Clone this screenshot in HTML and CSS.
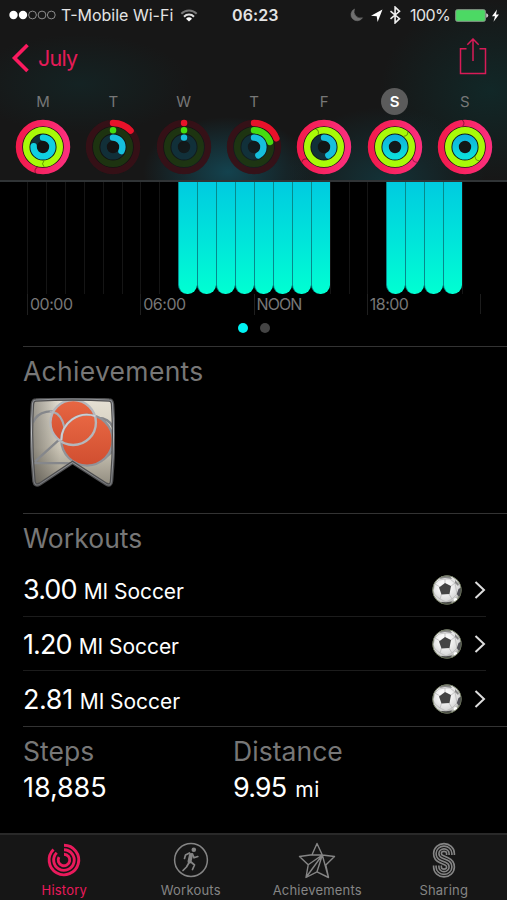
FILE: index.html
```
<!DOCTYPE html>
<html lang="en">
<head>
<meta charset="utf-8">
<title>Activity</title>
<link rel="stylesheet" href="styles.css">
</head>
<body>
<svg class="defs" width="0" height="0" aria-hidden="true">
  <defs>
    <linearGradient id="move" x1="0" y1="0" x2="1" y2="0"><stop offset="0" stop-color="#f31b4d"/><stop offset="1" stop-color="#fb2f7c"/></linearGradient>
    <linearGradient id="stand" x1="0" y1="0" x2="0" y2="1"><stop offset="0" stop-color="#0fb2dc"/><stop offset="1" stop-color="#0ce0dc"/></linearGradient>
    <radialGradient id="ballShade" cx=".42" cy=".38" r=".62"><stop offset=".3" stop-color="#f8f8f8"/><stop offset=".8" stop-color="#d8d8d8"/><stop offset="1" stop-color="#9d9f98"/></radialGradient>
    <clipPath id="ballClip"><circle cx="15" cy="15" r="14.2"/></clipPath>
    <symbol id="ball" viewBox="0 0 30 30">
      <circle cx="15" cy="15" r="14.500" fill="url(#ballShade)"/>
      <g clip-path="url(#ballClip)">
        <path d="M8 12L3 9M18.500 11.500L23 8M17 19L20 24M9.500 19L8 24M13 8.500V4M3 9L1 16L3 20L8 24L14 27L20 24L25 19L23 8L18 4L13 4L7 5Z" fill="none" stroke="#b4b4b4" stroke-width=".7"/>
        <path d="M13 8L19 11L17.500 19L9.500 19.500L7 12.500Z" fill="#444"/>
        <path d="M9 0L18 1L20 4L13 3L8 4Z" fill="#888"/>
        <path d="M0 8L2 7L2 10L1 15Z" fill="#777"/>
        <path d="M30 12L26.500 14L24.800 19L27 22L30 19Z" fill="#505056"/>
        <path d="M9 27L14 27.300L20 26.500L18 30H11Z" fill="#4a4a4a"/>
        <path d="M23 5L27 9L26 11L23 8Z" fill="#888"/>
        <circle cx="23.500" cy="25" r="2" fill="#fff"/>
      </g>
      <circle cx="15" cy="15" r="14.300" fill="none" stroke="#5e6a48" stroke-width=".7"/>
    </symbol>
  </defs>
</svg>
<div class="screen">
  <header class="header">
    <div class="status">
      <div class="status-left">
        <svg width="47" height="12" viewBox="0 0 47 12"><g fill="#fff"><circle cx="4.500" cy="6" r="4.200"/><circle cx="14" cy="6" r="4.200"/></g><g fill="none" stroke="#999" stroke-width=".9"><circle cx="23.500" cy="6" r="3.900"/><circle cx="33" cy="6" r="3.900"/><circle cx="42.300" cy="6" r="3.900"/></g></svg>
        <span class="carrier">T-Mobile Wi-Fi</span>
        <svg width="18" height="13" viewBox="0 0 18 13" fill="none" stroke-width="2"><path d="M1.300 4.700A10.800 10.800 0 0 1 16.700 4.700" stroke="#777"/><path d="M4 7.700A7 7 0 0 1 14 7.700" stroke="#ddd"/><path d="M9 12.500L6 9.700A4.500 4.500 0 0 1 12 9.700Z" fill="#fff"/></svg>
      </div>
      <span class="time">06:23</span>
      <div class="status-right">
        <svg width="60" height="18" viewBox="0 0 60 18"><path d="M5.500 3A6.200 6.200 0 1 0 13.500 11.800A6.600 6.600 0 0 1 5.500 3Z" fill="#707070" stroke="#707070" stroke-width=".6"/><path d="M33.500 3.500L22 9.800L27.700 10.200L28.600 16Z" fill="#fff"/><path d="M41.500 5.200L50.500 12.700L46.100 16.900V1.100L50.500 5.300L41.500 12.800" fill="none" stroke="#eee" stroke-width="1.600"/></svg>
        <span class="percent">100%</span>
        <svg width="47" height="16" viewBox="0 0 47 16"><rect x=".7" y="2.700" width="29.600" height="11.600" rx="1.500" fill="#4cd964" stroke="#8a9a8c" stroke-width="1"/><path d="M31.200 6.200Q33.200 6.800 33.200 8.500T31.200 10.800Z" fill="#ccc"/><path d="M42 2.500L37 9.300H40L38.500 14.800L44 7.600H41Z" fill="#fff"/></svg>
      </div>
    </div>
    <nav class="nav">
      <a class="back"><svg width="20" height="30" viewBox="0 0 20 30"><path d="M16.500 2L3.500 15L16.500 28" fill="none" stroke="#fb1a5f" stroke-width="3.600"/></svg><span>July</span></a>
      <svg width="28" height="38" viewBox="0 0 28 38" fill="none" stroke="#d81b57" stroke-width="1.500"><path d="M7.500 10.800H1.500V35.500H26.500V10.800H20.500M14 23V1.500M8.300 6.700L14 1L19.700 6.700"/></svg>
    </nav>
    <div class="week" id="week"></div>
  </header>
  <section class="chart">
    <div class="hours" id="hours"></div>
    <div class="ticks"><span>00:00</span><span>06:00</span><span class="noon">NOON</span><span>18:00</span></div>
    <div class="pager"><i class="on"></i><i></i></div>
  </section>
  <section class="achievements">
    <h2>Achievements</h2>
    <svg class="badge" width="85" height="90" viewBox="0 0 86 92" preserveAspectRatio="none">
      <defs>
        <linearGradient id="plate" x1="0" y1="0" x2="0" y2="1"><stop offset="0" stop-color="#e6e1d4"/><stop offset=".55" stop-color="#ccc6b7"/><stop offset="1" stop-color="#8d887b"/></linearGradient>
        <linearGradient id="side" x1="0" y1="0" x2="1" y2="0"><stop offset="0" stop-color="#000" stop-opacity=".35"/><stop offset=".35" stop-color="#000" stop-opacity="0"/></linearGradient>
        <linearGradient id="rim" x1="0" y1="0" x2="0" y2="1"><stop offset="0" stop-color="#8d9095"/><stop offset=".4" stop-color="#b9bbbf"/><stop offset="1" stop-color="#77797d"/></linearGradient>
        <linearGradient id="orange" x1="0" y1="0" x2="0" y2="1"><stop offset="0" stop-color="#e86743"/><stop offset="1" stop-color="#d04e30"/></linearGradient>
        <clipPath id="badgeClip"><path d="M6 2Q43 0 80 2Q83 2 83.500 6Q86 44 82.500 85Q82 91 77 88L43 66L10 88Q5 91 4 85Q0 44 2.500 6Q3 2 6 2Z"/></clipPath>
      </defs>
      <g clip-path="url(#badgeClip)">
        <rect width="86" height="92" fill="url(#plate)"/>
        <rect width="86" height="92" fill="url(#side)"/>
        <path d="M3 25C8 13 24 10 31 19Q35 27 32 38L29 43L5 65M4 66.500H33L43 67M62 21Q79 18 84 30M74 63L84 54" fill="none" stroke="#85878b" stroke-width="2.400"/>
        <circle cx="43.700" cy="25" r="23" fill="url(#orange)"/>
        <circle cx="57.700" cy="43" r="26" fill="url(#orange)"/>
        <path d="M20 14Q29 14 33 24Q34 27 35 31" fill="none" stroke="#aaabb0" stroke-width="2.200"/>
        <circle cx="57.700" cy="43" r="26" fill="none" stroke="#909298" stroke-width="2.300"/>
        <circle cx="43.700" cy="25" r="23" fill="none" stroke="#b4b7bc" stroke-width="2.400"/>
        <path d="M31.700 43A26 26 0 0 1 66 18.500" fill="none" stroke="#ccced2" stroke-width="2"/>
      </g>
      <path d="M6 2Q43 0 80 2Q83 2 83.500 6Q86 44 82.500 85Q82 91 77 88L43 66L10 88Q5 91 4 85Q0 44 2.500 6Q3 2 6 2Z" fill="none" stroke="#4d4d4e" stroke-width="3.500"/>
      <path d="M6 2Q43 0 80 2Q83 2 83.500 6Q86 44 82.500 85Q82 91 77 88L43 66L10 88Q5 91 4 85Q0 44 2.500 6Q3 2 6 2Z" fill="none" stroke="url(#rim)" stroke-width="1.100"/>
    </svg>
  </section>
  <section class="workouts">
    <h2>Workouts</h2>
    <div class="row"><p><strong>3.00</strong><span>MI Soccer</span></p><svg class="ball" width="30" height="30"><use href="#ball"/></svg><svg width="12" height="20" viewBox="0 0 12 20"><path d="M1.500 2L10 10L1.500 18" fill="none" stroke="#ddd" stroke-width="2"/></svg></div>
    <div class="row"><p><strong>1.20</strong><span>MI Soccer</span></p><svg class="ball" width="30" height="30"><use href="#ball"/></svg><svg width="12" height="20" viewBox="0 0 12 20"><path d="M1.500 2L10 10L1.500 18" fill="none" stroke="#ddd" stroke-width="2"/></svg></div>
    <div class="row"><p><strong class="loose">2.81</strong><span>MI Soccer</span></p><svg class="ball" width="30" height="30"><use href="#ball"/></svg><svg width="12" height="20" viewBox="0 0 12 20"><path d="M1.500 2L10 10L1.500 18" fill="none" stroke="#ddd" stroke-width="2"/></svg></div>
  </section>
  <section class="totals">
    <div><h2>Steps</h2><p><strong class="steps">18,885</strong></p></div>
    <div><h2>Distance</h2><p><strong>9.95</strong><span class="unit">mi</span></p></div>
  </section>
  <footer class="tabs">
    <a class="active"><svg width="38" height="38" viewBox="0 0 38 38" fill="none" stroke="#ea1a5c" stroke-width="2.900"><path d="M19 4.200A14.800 14.800 0 1 1 8.500 8.500"/><path d="M19 8.700A10.300 10.300 0 1 1 11.700 11.700"/><path d="M19 13.200A5.800 5.800 0 1 1 14 16"/></svg><span>History</span></a>
    <a><svg width="38" height="38" viewBox="0 0 38 38"><circle cx="19" cy="19" r="16.400" fill="none" stroke="#858585" stroke-width="1.500"/><g fill="none" stroke="#858585" stroke-linejoin="round" stroke-linecap="round"><path d="M19 14L17.500 20.500" stroke-width="4"/><path d="M17.500 12L13.500 14L12.500 17.500M20.500 13L22 16.800L25.800 15.500M19 21L22.500 24L20.500 28.500M16.800 22L14.500 26L11 29.500" stroke-width="1.700"/></g><circle cx="21.800" cy="8.800" r="2.300" fill="#858585"/></svg><span>Workouts</span></a>
    <a><svg width="38" height="38" viewBox="0 0 38 38" fill="none" stroke="#858585" stroke-width="1.400" stroke-linejoin="round"><path d="M19 2.500L24.300 14L36.500 15.500L27.800 24L30.500 36.500L19 30.800L8 36.500L10.200 23.800L1.500 15.500L14 13.800ZM14 13.800L24.300 14L10.200 23.800M24.300 14L8 36.500M24.300 14L19 30.800M24.300 14L30.500 36.500"/></svg><span>Achievements</span></a>
    <a><svg width="38" height="38" viewBox="-.5 0 38 38" fill="none"><path d="M25 14V12.500A6.500 6 0 0 0 12 12.500Q12 16.500 16 18.200L21 20.300Q25 22 25 26A6.500 6 0 0 1 12 26V24.500" stroke="#858585" stroke-width="9.400"/><path d="M25 15V12.500A6.500 6 0 0 0 12 12.500Q12 16.500 16 18.200L21 20.300Q25 22 25 26A6.500 6 0 0 1 12 26V23.500" stroke="#161616" stroke-width="6.200"/><path d="M25 14V12.500A6.500 6 0 0 0 12 12.500Q12 16.500 16 18.200L21 20.300Q25 22 25 26A6.500 6 0 0 1 12 26V24.500" stroke="#858585" stroke-width="4.400"/><path d="M25 15V12.500A6.500 6 0 0 0 12 12.500Q12 16.500 16 18.200L21 20.300Q25 22 25 26A6.500 6 0 0 1 12 26V23.500" stroke="#161616" stroke-width="1.200"/></svg><span>Sharing</span></a>
  </footer>
</div>
<script src="app.js"></script>
</body>
</html>
```
FILE: styles.css
```
* { box-sizing: border-box; }
body { margin: 0; background: #000; color: #fff; font-family: Inter, "Liberation Sans", sans-serif; }
.defs { position: absolute; }
svg { display: block; flex: none; }
h2, p { margin: 0; font-weight: 400; }
.screen { width: 507px; height: 900px; display: flex; flex-direction: column; overflow: hidden; background: #000; }

.header {
  height: 182px;
  border-bottom: 2px solid #303436;
  background:
    radial-gradient(ellipse 85px 55px at 228px 172px, rgba(18, 85, 102, .7), transparent),
    radial-gradient(ellipse 100px 75px at 385px 182px, rgba(18, 62, 70, .7), transparent),
    radial-gradient(ellipse 110px 90px at 490px 90px, rgba(14, 48, 48, .65), transparent),
    radial-gradient(ellipse 110px 50px at 80px 84px, rgba(18, 42, 43, .6), transparent),
    #171717;
}
.status { height: 30px; display: grid; grid-template-columns: 232px 1fr auto; align-items: center; padding-right: 5px; font-size: 16px; line-height: 30px; color: #e4e4e4; }
.status-left, .status-right { display: flex; align-items: center; }
.status-left { padding-left: 9px; }
.carrier { width: 124px; padding-left: 5px; }
.time { font-weight: 600; letter-spacing: .1px; }
.percent { width: 45px; letter-spacing: -.6px; }
.status-right svg:first-child { margin-right: 1px; }
.nav { height: 56px; padding: 8px 20px 0 11px; display: flex; justify-content: space-between; }
.back { display: flex; align-items: center; height: 40px; color: #e51b58; font-size: 21.500px; letter-spacing: -.8px; gap: 7px; }
.week { height: 94px; display: grid; grid-template-columns: repeat(7, 1fr); padding: 2px 7px 0 8px; }
.day { display: flex; flex-direction: column; align-items: center; gap: 4px; }
.day b { width: 27px; height: 27px; border-radius: 50%; font: 400 15px/27px Inter, sans-serif; text-align: center; color: #777; }
.day.selected b { background: #5b5b5b; color: #fff; font-weight: 600; }

.chart { height: 164px; }
.hours { height: 112px; margin-left: 27px; width: 454px; display: grid; grid-template-columns: repeat(24, 1fr); }
.hours i { border-left: 1px solid #151515; }
.hours .bar { border-left-color: #078a8c; background: linear-gradient(#00cbe0, #00e6da 55%, #00ffd2); border-radius: 0 0 9px 9px; }
.ticks { height: 20px; margin-left: 27px; width: 454px; display: grid; grid-template-columns: repeat(4, 1fr); border-right: 1px solid #1c1c1c; }
.ticks span { border-left: 1px solid #1f1f1f; padding-left: 2px; font-size: 16px; line-height: 21px; letter-spacing: -.5px; color: #777; }
.ticks .noon { letter-spacing: -.9px; }
.pager { display: flex; justify-content: center; gap: 12px; padding-top: 9px; }
.pager i { width: 10px; height: 10px; border-radius: 50%; background: #444; }
.pager .on { background: #00f3f3; }

h2 { font-size: 26.500px; line-height: 32px; color: #777; letter-spacing: .05px; }
.achievements, .workouts, .totals { margin-left: 23px; border-top: 1px solid #333; }
.achievements { height: 167px; padding-top: 8px; }
.achievements h2 { letter-spacing: .3px; }
.badge { margin: 11px 0 0 7px; }
.workouts { height: 213px; padding-top: 8px; }
.workouts h2 { margin-bottom: 8px; }
.row { height: 54.500px; width: 463px; padding-top: 2px; display: flex; align-items: center; border-bottom: 1px solid #1c1c1c; }
.row:last-child { border-bottom: 0; }
.row p { flex: 1; padding-top: 1px; }
strong { font-weight: 400; font-size: 27px; line-height: 32px; letter-spacing: -.9px; }
.loose { letter-spacing: -.4px; }
.steps { letter-spacing: -.1px; }
p span { font-size: 21px; margin-left: 7px; letter-spacing: -.05px; }
p .unit { margin-left: 9px; letter-spacing: .6px; }
.ball { margin-right: 12px; }
.totals { flex: 1; display: grid; grid-template-columns: 210px 1fr; padding-top: 8px; }
.totals p { margin-top: 5px; }

.tabs { height: 67px; padding-left: 1px; border-top: 2px solid #292929; background: #161616; display: grid; grid-template-columns: repeat(4, 1fr); }
.tabs a { display: flex; flex-direction: column; align-items: center; padding-top: 6px; font-size: 13px; line-height: 16px; letter-spacing: .2px; color: #858585; gap: 3px; }
.tabs .active { color: #ea1a5c; }
```
FILE: app.js
```
// Each ring: share of a full turn completed, outermost first.
const days = [
  { name: "M", rings: [1, 1, .76], seams: [.55, .5] },
  { name: "T", rings: [.13, .001, .32] },
  { name: "W", rings: [.001, .001, .001] },
  { name: "T", rings: [.19, .2, .42] },
  { name: "F", rings: [1, 1, .42], seams: [.66, .94] },
  { name: "S", rings: [1, 1, 1], seams: [.35, .12], selected: true },
  { name: "S", rings: [1, 1, 1], seams: [.99, .38] },
];
const radii = [24, 16.800, 9.400];
const tracks = ["#3c1018", "#203a10", "#12353f"];
const full = ["url(#move)", "#a8fa08", "url(#stand)"];
const partial = ["#e8122a", "#45dc10", "#16bfdc"];

function ring(i, share, seam) {
  const r = radii[i];
  const turn = 2 * Math.PI * r;
  const color = share === 1 ? full[i] : share > .5 ? "#10cfe0" : partial[i];
  let s = `<circle r="${r}" stroke="${tracks[i]}" stroke-opacity=".85"/>`;
  s += share === 1
    ? `<circle r="${r}" stroke="${color}"/>`
    : `<circle r="${r}" stroke="${color}" stroke-linecap="round" stroke-dasharray="${share * turn} ${turn}" transform="rotate(-90)"/>`;
  if (seam !== undefined) {
    s += `<path d="M-1 ${-r - 3}q3 3 0 6" stroke="#000" stroke-opacity=".4" stroke-width="1" transform="rotate(${seam * 360})"/>`;
  }
  return s;
}

document.getElementById("week").innerHTML = days.map(d =>
  `<div class="day${d.selected ? " selected" : ""}"><b>${d.name}</b><svg width="56" height="56" viewBox="-28 -28 56 56" fill="none" stroke-width="6.400"><circle r="27" fill="#111" fill-opacity=".6" stroke="none"/>${d.rings.map((v, i) => ring(i, v, d.seams && d.seams[i])).join("")}</svg></div>`
).join("");

const active = h => (h >= 8 && h < 16) || (h >= 19 && h < 23);
document.getElementById("hours").innerHTML =
  Array.from({ length: 24 }, (_, h) => `<i${active(h) ? ' class="bar"' : ""}></i>`).join("");
```
